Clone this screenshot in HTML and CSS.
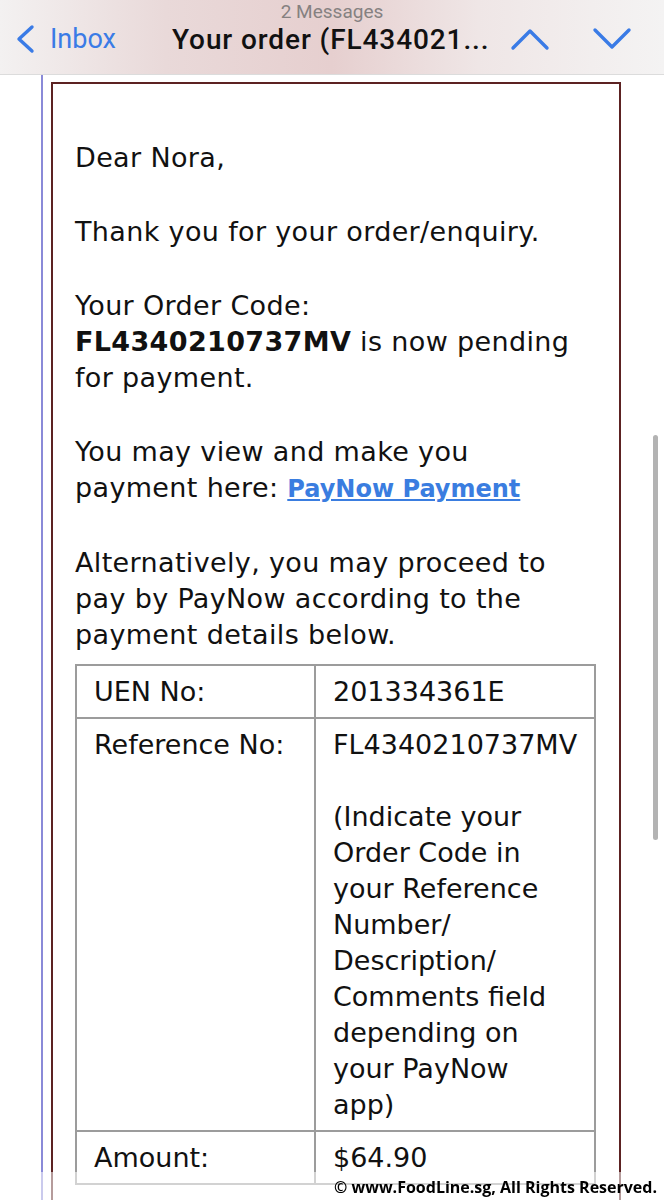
FILE: index.html
```html
<!DOCTYPE html>
<html lang="en">
<head>
    <meta charset="UTF-8">
    <meta name="viewport" content="width=device-width, initial-scale=1.0">
    <title>Your order</title>
    <link rel="stylesheet" href="styles.css">
</head>
<body>
    <div class="nav-bar">
        <div class="nav-count">2 Messages</div>
        <div class="nav-row">
            <a class="nav-back" href="#">
                <svg width="22" height="30" viewBox="0 0 22 30"><path d="M18 3 L5 15 L18 27" fill="none" stroke="#3a7be6" stroke-width="3.4" stroke-linecap="round" stroke-linejoin="round"/></svg>
                <span>Inbox</span>
            </a>
            <div class="nav-title">Your order (FL434021...</div>
            <div class="nav-arrows">
                <svg width="40" height="24" viewBox="0 0 40 24"><path d="M3 21 L20 4 L37 21" fill="none" stroke="#3a7be6" stroke-width="3.4" stroke-linecap="round" stroke-linejoin="round"/></svg>
                <svg width="40" height="24" viewBox="0 0 40 24"><path d="M3 3 L20 20 L37 3" fill="none" stroke="#3a7be6" stroke-width="3.4" stroke-linecap="round" stroke-linejoin="round"/></svg>
            </div>
        </div>
    </div>

    <div class="mail">
        <div class="quote">
            <div class="letter">
                <p>Dear Nora,</p>
                <p>Thank you for your order/enquiry.</p>
                <p>Your Order Code:<br><b>FL4340210737MV</b> is now pending for payment.</p>
                <p>You may view and make you payment here: <a class="pay-link" href="#">PayNow Payment</a></p>
                <p>Alternatively, you may proceed to pay by PayNow according to the payment details below.</p>

                <table class="pay-table">
                    <colgroup>
                        <col class="col-label">
                        <col>
                    </colgroup>
                    <tr>
                        <td>UEN No:</td>
                        <td>201334361E</td>
                    </tr>
                    <tr>
                        <td>Reference No:</td>
                        <td>FL4340210737MV<br><br>(Indicate your Order Code in your Reference Number/ Description/ Comments field depending on your PayNow app)</td>
                    </tr>
                    <tr>
                        <td>Amount:</td>
                        <td>$64.90</td>
                    </tr>
                </table>
            </div>
        </div>
    </div>

    <div class="scroll-thumb"></div>

    <div class="watermark">&copy; www.FoodLine.sg, All Rights Reserved.</div>
</body>
</html>
```
FILE: styles.css
```css
body {
    margin: 0;
    background-color: #fff;
    color: #111;
    font-family: "DejaVu Sans", Verdana, sans-serif;
}

/* top bar */
.nav-bar {
    height: 74px;
    border-bottom: 1px solid #dcdcdc;
    background: linear-gradient(90deg, #f3f1f1 0%, #e9d9d9 25%, #e6cfcf 50%, #efe6e6 72%, #f4f3f3 100%);
    font-family: Roboto, "Liberation Sans", sans-serif;
}

.nav-count {
    text-align: center;
    font-size: 19px;
    line-height: 20px;
    color: #858181;
    padding-top: 2px;
}

.nav-row {
    display: flex;
    align-items: center;
    height: 34px;
    padding-left: 14px;
}

.nav-back {
    display: flex;
    align-items: center;
    gap: 14px;
    color: #3a7be6;
    text-decoration: none;
    font-size: 27px;
    width: 158px;
}

.nav-title {
    font-size: 28px;
    font-weight: 500;
    letter-spacing: 0.9px;
    color: #111;
    width: 338px;
}

.nav-arrows {
    display: flex;
    gap: 42px;
}

/* message body */
.mail {
    padding: 0 0 0 41px;
}

.quote {
    border-left: 2px solid #8a8ad8;
    padding: 7px 0 0 8px;
}

.letter {
    width: 522px;
    border: 2px solid #5c2222;
    padding: 56px 22px 40px 22px;
    font-size: 27px;
    line-height: 36px;
}

.letter p {
    margin: 0 0 38px;
    letter-spacing: 0.35px;
}

.pay-link {
    color: #3a7de0;
    font-weight: bold;
    font-size: 24px;
    letter-spacing: 0;
}

.pay-table {
    width: 521px;
    margin-top: -27px;
    table-layout: fixed;
    border-collapse: collapse;
}

.col-label {
    width: 239px;
}

.pay-table td {
    border: 2px solid #9c9c9c;
    padding: 8px 16px 7px 17px;
    vertical-align: top;
}

.scroll-thumb {
    position: absolute;
    left: 653px;
    top: 435px;
    width: 5px;
    height: 405px;
    border-radius: 3px;
    background-color: #b3b3b3;
}

.watermark {
    position: fixed;
    left: 0;
    right: 0;
    bottom: 0;
    height: 28px;
    padding-right: 7px;
    background-color: rgba(255, 255, 255, 0.55);
    text-align: right;
    font-family: "Open Sans", sans-serif;
    font-weight: bold;
    font-size: 16px;
    line-height: 30px;
    color: #000;
}
```
